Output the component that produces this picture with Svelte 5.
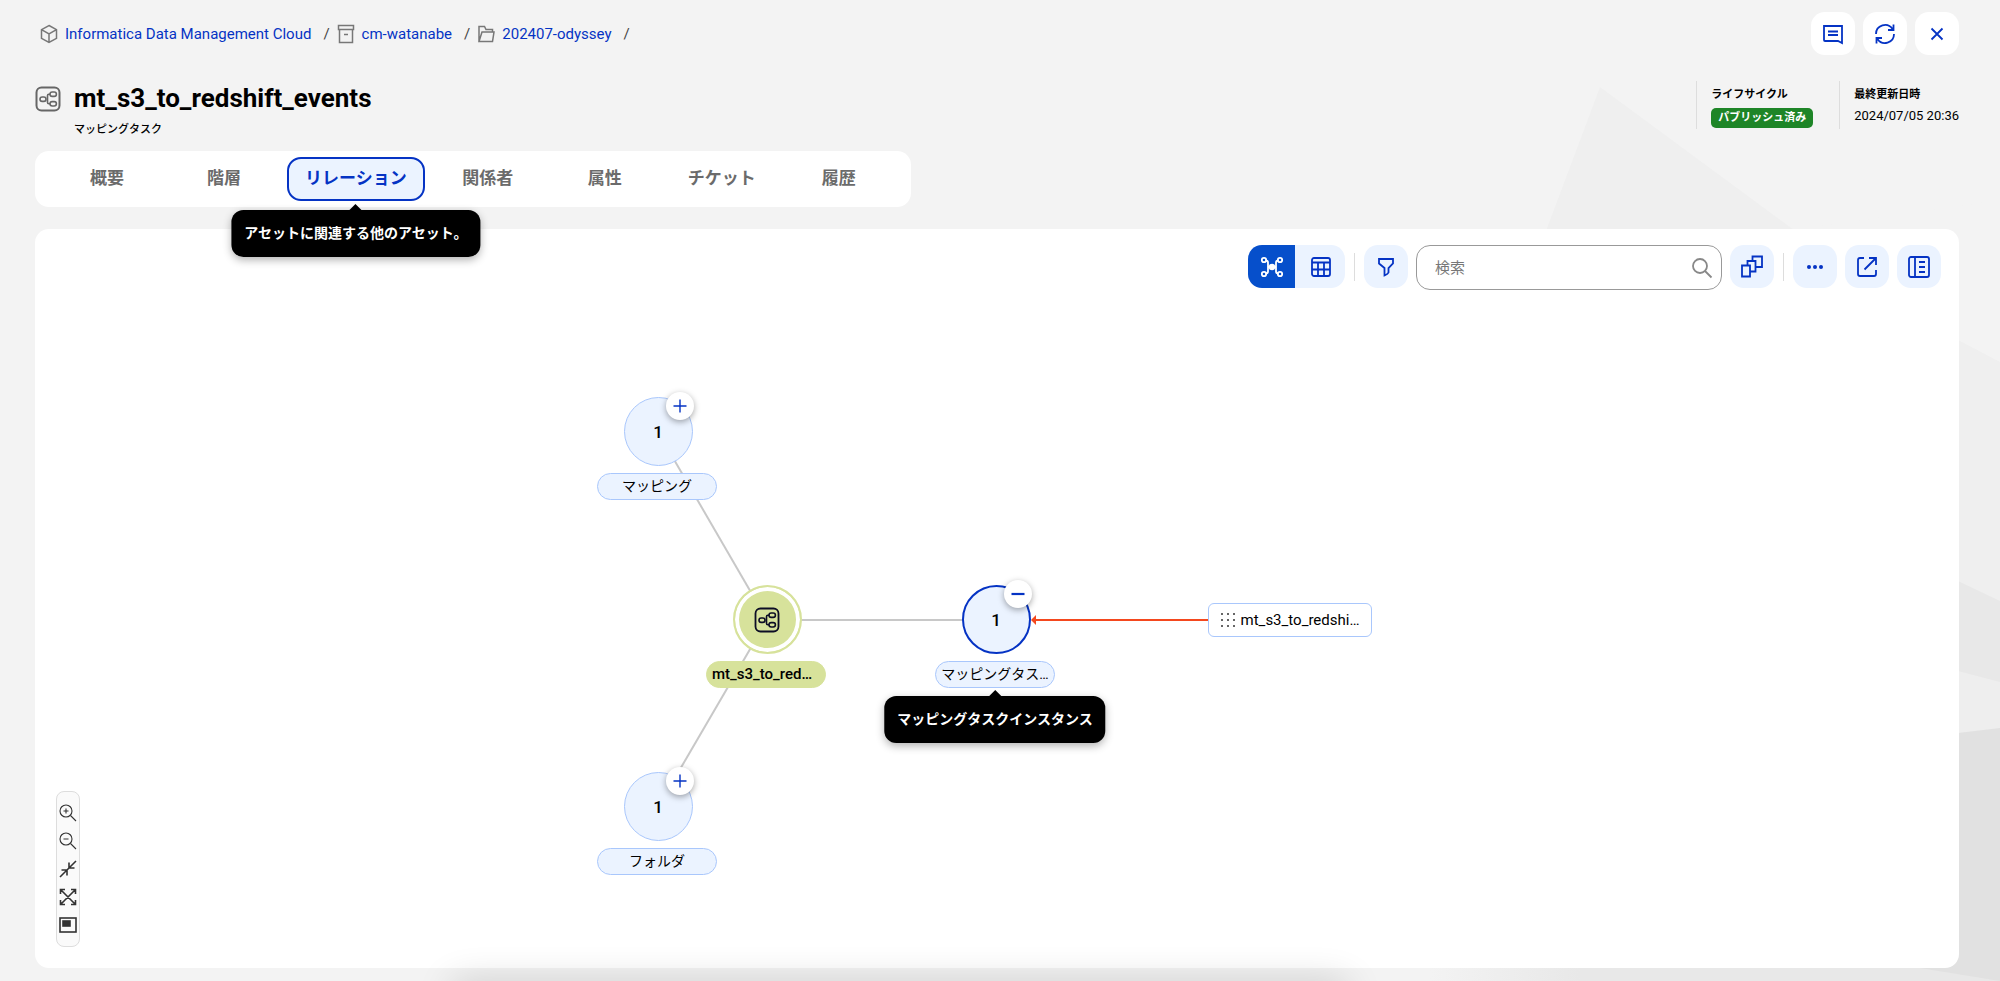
<script lang="ts">
	const crumbs = [
		{ icon: 'cube', label: 'Informatica Data Management Cloud' },
		{ icon: 'archive', label: 'cm-watanabe' },
		{ icon: 'folder', label: '202407-odyssey' }
	];

	const tabs = ['概要', '階層', 'リレーション', '関係者', '属性', 'チケット', '履歴'];
	let active = $state('リレーション');
	let query = $state('');

	// canvas coordinates of node centres
	const groups = [
		{ x: 623, y: 203, label: 'マッピング', open: false, tip: '' },
		{ x: 623, y: 578, label: 'フォルダ', open: false, tip: '' },
		{ x: 961, y: 391, label: 'マッピングタス…', open: true, tip: 'マッピングタスクインスタンス' }
	];
	const root = { x: 732, y: 391, label: 'mt_s3_to_red…' };
	const leaf = { x: 1255, y: 391, label: 'mt_s3_to_redshi…' };
</script>

{#snippet taskIcon()}
	<rect x="1.5" y="1.5" width="23" height="23" rx="5" />
	<g stroke-width="1.6">
		<rect x="5" y="11" width="6" height="4.4" rx="2.2" />
		<rect x="15" y="6" width="6.4" height="4.4" rx="2.2" />
		<rect x="15" y="15.6" width="6.4" height="4.4" rx="2.2" />
		<path d="M15 8.2h-1.2q-1.3 0-1.3 1.6v6.4q0 1.6 1.3 1.6H15" />
	</g>
{/snippet}

<div class="page">
	<svg class="backdrop" viewBox="0 0 2000 981" preserveAspectRatio="xMaxYMin slice" aria-hidden="true">
		<defs>
			<linearGradient id="floor" gradientUnits="userSpaceOnUse" x1="1430" y1="0" x2="1580" y2="0">
				<stop offset="0" stop-color="#f3f3f3" />
				<stop offset="1" stop-color="#e8e8e8" />
			</linearGradient>
		</defs>
		<path fill="#efefef" d="M1600 87 1794 230 2000 362V620H1400z" />
		<path fill="#f3f3f3" d="M1794 230 1958 340 2000 362V200z" />
		<path fill="url(#floor)" d="M1700 460 1958 581 2000 601V981H1400z" />
		<path fill="#eeeeee" d="M1958 671 2000 682V740H1958z" />
		<path fill="#e1e1e1" d="M1958 733 2000 728V981L1920 968z" />
	</svg>

	<header class="top">
		<nav class="crumbs" aria-label="breadcrumb">
			{#each crumbs as c}
				<span class="crumb">
					<svg width="18" height="20" viewBox="0 0 18 20" aria-hidden="true">
						{#if c.icon === 'cube'}
							<path d="M9 1.5 16.5 5.6V14.4L9 18.5 1.5 14.4V5.6zM1.5 5.6 9 10l7.5-4.4M9 10v8.5" />
						{:else if c.icon === 'archive'}
							<path d="M1.5 1.5h15v4h-15zM2.5 5.5v13h13v-13M7 10.500h4" />
						{:else}
							<path d="M2 17.500V2.500h5.500l1.500 3h6.500v2.500M2 17.500 5 8h12l-1.500 9.500z" />
						{/if}
					</svg>
					<a href="#{c.icon}">{c.label}</a>
					<span class="slash">/</span>
				</span>
			{/each}
		</nav>
		<div class="top-actions">
			<button type="button" class="square white" aria-label="コメント">
				<svg width="22" height="22" viewBox="0 0 22 22">
					<path d="M2 3h18v17l-4-2H3q-1 0-1-1zM6 8.500h10M6 12h10" />
				</svg>
			</button>
			<button type="button" class="square white" aria-label="更新">
				<svg width="22" height="22" viewBox="0 0 22 22">
					<path d="M2 11a9 9 0 0 1 16.500-5M20 11a9 9 0 0 1-16.500 5M19.500 1.500V7H14M2.500 20.500V15H8" />
				</svg>
			</button>
			<button type="button" class="square white" aria-label="閉じる">
				<svg width="22" height="22" viewBox="0 0 22 22"><path d="M5.500 5.500l11 11M16.500 5.500l-11 11" /></svg>
			</button>
		</div>
	</header>

	<section class="heading">
		<svg class="title-icon" width="26" height="26" viewBox="0 0 26 26" aria-hidden="true">{@render taskIcon()}</svg>
		<div class="title">
			<h1>mt_s3_to_redshift_events</h1>
			<p>マッピングタスク</p>
		</div>
		<dl class="meta">
			<div>
				<dt>ライフサイクル</dt>
				<dd><span class="badge">パブリッシュ済み</span></dd>
			</div>
			<div>
				<dt>最終更新日時</dt>
				<dd>2024/07/05 20:36</dd>
			</div>
		</dl>
	</section>

	<div class="tabs" role="tablist">
		{#each tabs as tab}
			<div class="tab-slot">
				<button
					type="button"
					role="tab"
					class="tab"
					class:active={tab === active}
					aria-selected={tab === active}
					onclick={() => (active = tab)}>{tab}</button
				>
				{#if tab === 'リレーション'}
					<div class="tooltip" role="tooltip">アセットに関連する他のアセット。</div>
				{/if}
			</div>
		{/each}
	</div>

	<main class="panel">
		<div class="toolbar">
			<div class="toggle">
				<button type="button" class="on" aria-label="ダイアグラム">
					<svg width="24" height="24" viewBox="0 0 24 24">
						<path d="M5.500 5.500q2.500 0 2.500 2v9q0 2-2.500 2M18.500 5.500q-2.500 0-2.500 2v9q0 2 2.500 2M8 12h8" />
						<circle cx="4" cy="5" r="2.200" /><circle cx="20" cy="5" r="2.200" />
						<circle cx="4" cy="19" r="2.200" /><circle cx="20" cy="19" r="2.200" />
						<circle class="dots" cx="12" cy="12" r="3.200" />
					</svg>
				</button>
				<button type="button" aria-label="テーブル">
					<svg width="22" height="22" viewBox="0 0 22 22">
						<rect x="2" y="2" width="18" height="18" rx="2" />
						<path d="M2 6.500h18M2 13.500h18M8 6.500V20M14 6.500V20" />
					</svg>
				</button>
			</div>
			<span class="divider"></span>
			<button type="button" class="square" aria-label="フィルタ">
				<svg width="22" height="22" viewBox="0 0 22 22">
					<path d="M4 3h14v4.500l-4.500 4.500v4.500q-.5 1.500-4 3V12L4 7.500z" />
				</svg>
			</button>
			<label class="search">
				<input type="search" placeholder="検索" aria-label="検索" bind:value={query} />
				<svg width="22" height="22" viewBox="0 0 22 22" aria-hidden="true">
					<circle cx="9" cy="9" r="7" /><path d="M14 14l6.500 6.500" />
				</svg>
			</label>
			<button type="button" class="square" aria-label="グループ">
				<svg width="24" height="24" viewBox="0 0 24 24">
					<path d="M2 10.500h8v11H2zM7.500 10.500v-4.500h8v10.500H10M12.500 6V1.500H22v10.500h-6.500" />
				</svg>
			</button>
			<span class="divider"></span>
			<button type="button" class="square" aria-label="その他">
				<svg width="22" height="22" viewBox="0 0 22 22">
					<g class="dots"><circle cx="5" cy="11" r="2" /><circle cx="11" cy="11" r="2" /><circle cx="17" cy="11" r="2" /></g>
				</svg>
			</button>
			<button type="button" class="square" aria-label="開く">
				<svg width="22" height="22" viewBox="0 0 22 22">
					<path d="M8 2H4Q2 2 2 4v14q0 2 2 2h14q2 0 2-2v-4M13 2h7v7M20 2 8.500 13.500" />
				</svg>
			</button>
			<button type="button" class="square" aria-label="パネル">
				<svg width="24" height="24" viewBox="0 0 24 24">
					<rect x="2" y="2" width="20" height="20" rx="2" />
					<path d="M8 2v20M12 7h6M12 12h6M12 17h6" />
				</svg>
			</button>
		</div>

		<div class="canvas">
			<svg class="edges" aria-hidden="true">
				{#each groups as g}
					<line x1={root.x} y1={root.y} x2={g.x} y2={g.y} />
				{/each}
				<line class="hot" x1="1000" y1="391" x2="1174" y2="391" />
				<path class="head" d="M996 391l5-5v10z" />
			</svg>

			{#each groups as g}
				<div class="node" style:left="{g.x}px" style:top="{g.y}px">
					<div class="circle" class:open={g.open}>1</div>
					<button type="button" class="expand" aria-label={g.open ? '折りたたむ' : '展開'}>
						<svg width="14" height="14" viewBox="0 0 14 14">
							{#if g.open}
								<path stroke-width="2.200" d="M.5 7h13" />
							{:else}
								<path stroke-width="1.400" d="M.5 7h13M7 .5v13" />
							{/if}
						</svg>
					</button>
					<div class="label">
						{g.label}
						{#if g.tip}<div class="tooltip" role="tooltip">{g.tip}</div>{/if}
					</div>
				</div>
			{/each}

			<div class="node root" style:left="{root.x}px" style:top="{root.y}px">
				<div class="circle">
					<svg width="26" height="26" viewBox="0 0 26 26">{@render taskIcon()}</svg>
				</div>
				<div class="label">{root.label}</div>
			</div>

			<div class="leaf" style:left="{leaf.x}px" style:top="{leaf.y}px">
				<svg width="14" height="14" viewBox="0 0 14 14">
					{#each [1, 7, 13] as cy}
						{#each [1, 7, 13] as cx}<rect x={cx - 1} y={cy - 1} width="2" height="2" />{/each}
					{/each}
				</svg>
				{leaf.label}
			</div>

			<div class="zoom">
				<button type="button" aria-label="拡大">
					<svg width="18" height="18" viewBox="0 0 18 18"><circle cx="7" cy="7" r="6" /><path d="M11.500 11.500 17 17M4.500 7h5M7 4.500v5" /></svg>
				</button>
				<button type="button" aria-label="縮小">
					<svg width="18" height="18" viewBox="0 0 18 18"><circle cx="7" cy="7" r="6" /><path d="M11.500 11.500 17 17M4.500 7h5" /></svg>
				</button>
				<button type="button" aria-label="縮める">
					<svg class="bold" width="18" height="18" viewBox="0 0 18 18"><path d="M1 17 17 1M2.500 10H8v5.500M10 2.500V8h5.500" /></svg>
				</button>
				<button type="button" aria-label="全体表示">
					<svg class="bold" width="18" height="18" viewBox="0 0 18 18"><path d="M1.500 1.500l15 15M16.500 1.500l-15 15M1.500 6V1.500H6M12 1.500h4.500V6M16.500 12v4.500H12M6 16.500H1.500V12" /></svg>
				</button>
				<button type="button" aria-label="ミニマップ">
					<svg class="bold" width="18" height="18" viewBox="0 0 18 18"><rect x="1" y="2" width="16" height="14" /><rect class="fill" x="4" y="5" width="7" height="5" /></svg>
				</button>
			</div>
		</div>
	</main>
	<div class="dock-shadow"></div>
</div>

<style>
	:global(body) {
		background: #f3f3f3;
	}

	.page {
		--blue: #0533c4;
		--pale: #ebf3ff;
		--line: #a9c7fc;
		position: relative;
		box-sizing: border-box;
		display: flex;
		flex-direction: column;
		min-height: 100vh;
		padding: 12px 41px 13px 35px;
		overflow: hidden;
		font-family: Roboto, 'Noto Sans CJK JP', sans-serif;
		color: #000;
	}

	.page > * {
		position: relative;
	}

	.page > .backdrop {
		position: absolute;
		inset: 0;
		width: 100%;
		height: 100%;
	}

	svg {
		flex: none;
		fill: none;
		stroke: currentColor;
		stroke-width: 1.8;
	}

	.backdrop,
	.dots {
		stroke: none;
	}

	.dots {
		fill: currentColor;
	}

	button {
		display: flex;
		align-items: center;
		justify-content: center;
		margin: 0;
		padding: 0;
		border: 0;
		background: none;
		color: var(--blue);
		font: inherit;
		cursor: pointer;
	}

	.top {
		display: flex;
		justify-content: space-between;
	}

	.crumbs {
		display: flex;
		gap: 7px;
		height: 43px;
		padding-left: 5px;
		font-size: 15px;
	}

	.crumb {
		display: flex;
		align-items: center;
		gap: 7px;
		line-height: 20px;
	}

	.crumb svg {
		color: #777;
		stroke-width: 1.5;
	}

	.crumb a {
		color: var(--blue);
		text-decoration: none;
	}

	.slash {
		padding-left: 5px;
		color: #444;
	}

	.top-actions {
		display: flex;
		gap: 8px;
	}

	.square {
		width: 44px;
		height: 43px;
		border-radius: 14px;
		background: var(--pale);
	}

	.square.white {
		background: #fff;
	}

	.heading {
		display: flex;
		align-items: flex-start;
		margin-top: 26px;
		height: 70px;
	}

	.title-icon {
		margin-top: 5px;
		color: #666;
		stroke-width: 2;
	}

	.title {
		flex: 1;
		padding-left: 13px;
	}

	h1 {
		margin: 0;
		font-size: 26px;
		font-weight: 700;
		line-height: 34px;
	}

	.title p {
		margin: 7px 0 0;
		font-size: 11px;
		font-weight: 500;
		line-height: 16px;
	}

	.meta {
		display: flex;
		gap: 26px;
		margin: 0;
	}

	.meta > div {
		box-sizing: border-box;
		height: 48px;
		padding: 6px 0 0 14px;
		border-left: 1px solid #ddd;
	}

	dt {
		font-size: 11px;
		font-weight: 700;
		line-height: 16px;
	}

	dd {
		display: flex;
		margin: 5px 0 0;
		font-size: 13px;
		line-height: 16px;
	}

	.badge {
		padding: 2px 7px;
		border-radius: 5px;
		background: #1e8527;
		color: #fff;
		font-size: 11px;
		font-weight: 700;
	}

	.tabs {
		z-index: 2;
		display: flex;
		align-self: flex-start;
		gap: 9px;
		padding: 6px 18px;
		border-radius: 14px;
		background: #fff;
	}

	.tab-slot {
		position: relative;
	}

	.tab {
		box-sizing: border-box;
		min-width: 108px;
		height: 44px;
		padding: 0 16px 5px;
		border: 2px solid transparent;
		border-radius: 14px;
		color: #6b6b6b;
		font-size: 17px;
		font-weight: 700;
	}

	.tab.active {
		border-color: var(--blue);
		background: var(--pale);
		color: var(--blue);
	}

	.tooltip {
		position: absolute;
		top: calc(100% + 9px);
		left: 50%;
		z-index: 3;
		padding: 0 13px;
		border-radius: 12px;
		background: #000;
		box-shadow: 0 3px 8px rgba(0, 0, 0, 0.3);
		color: #fff;
		font-size: 14px;
		font-weight: 700;
		line-height: 47px;
		white-space: nowrap;
		transform: translateX(-50%);
	}

	.tooltip::before {
		content: '';
		position: absolute;
		bottom: 100%;
		left: 50%;
		border: 6px solid transparent;
		border-top: 0;
		border-bottom-color: #000;
		transform: translateX(-50%);
	}

	.panel {
		display: flex;
		flex: 1;
		flex-direction: column;
		margin-top: 22px;
		border-radius: 14px;
		background: #fff;
	}

	.toolbar {
		z-index: 1;
		display: flex;
		align-items: flex-start;
		justify-content: flex-end;
		gap: 8px;
		padding: 16px 18px 0;
	}

	.toggle {
		display: flex;
		gap: 1px;
		overflow: hidden;
		border-radius: 14px;
		background: var(--pale);
	}

	.toggle button {
		width: 49px;
		height: 43px;
	}

	.toggle .on {
		width: 47px;
		background: #064fcb;
		color: #fff;
	}

	.divider {
		width: 1px;
		height: 28px;
		margin: 8px 1px 0;
		background: #ddd;
	}

	.search {
		box-sizing: border-box;
		display: flex;
		align-items: center;
		width: 306px;
		height: 45px;
		padding: 0 8px 0 18px;
		border: 1px solid #999;
		border-radius: 14px;
		background: #fff;
		color: #888;
	}

	.search input {
		flex: 1;
		min-width: 0;
		padding: 0;
		border: 0;
		outline: 0;
		background: none;
		font: 15px Roboto, 'Noto Sans CJK JP', sans-serif;
	}

	.search input::placeholder {
		color: #777;
	}

	.canvas {
		position: relative;
		flex: 1;
		min-height: 660px;
		margin-top: -61px;
	}

	.edges {
		position: absolute;
		inset: 0;
		width: 100%;
		height: 100%;
		stroke: #c8c8c8;
		stroke-width: 2;
	}

	.hot {
		stroke: #f4481e;
	}

	.head {
		fill: #f4481e;
		stroke: none;
	}

	.node {
		position: absolute;
		display: flex;
		flex-direction: column;
		align-items: center;
		width: 120px;
		margin: -35px 0 0 -60px;
	}

	.circle {
		box-sizing: border-box;
		display: flex;
		align-items: center;
		justify-content: center;
		width: 69px;
		height: 69px;
		border: 1px solid var(--line);
		border-radius: 50%;
		background: var(--pale);
		font-size: 17px;
		font-weight: 500;
	}

	.circle.open {
		border: 2px solid var(--blue);
	}

	.expand {
		position: absolute;
		top: -5px;
		left: 68px;
		width: 28px;
		height: 28px;
		border-radius: 50%;
		background: #fff;
		box-shadow: 0 2px 6px rgba(0, 0, 0, 0.35);
	}

	.label {
		position: relative;
		box-sizing: border-box;
		width: 120px;
		height: 27px;
		margin: 7px 2px 0 0;
		border: 1px solid var(--line);
		border-radius: 14px;
		background: var(--pale);
		font-size: 14px;
		line-height: 24px;
		text-align: center;
		white-space: nowrap;
	}

	.root .circle {
		border: 2px solid #d7e29b;
		background: #d7e29b;
		box-shadow: inset 0 0 0 4px #fff;
		color: #0d0d25;
	}

	.root .label {
		padding-left: 5px;
		border-color: #d7e29b;
		background: #d7e29b;
		font-size: 15px;
		font-weight: 500;
		text-align: left;
	}

	.leaf {
		position: absolute;
		box-sizing: border-box;
		display: flex;
		align-items: center;
		justify-content: center;
		gap: 6px;
		width: 164px;
		height: 34px;
		border: 1px solid var(--line);
		border-radius: 6px;
		background: #fff;
		font-size: 15px;
		transform: translate(-50%, -50%);
	}

	.leaf svg {
		fill: #666;
		stroke: none;
	}

	.zoom {
		position: absolute;
		bottom: 21px;
		left: 21px;
		box-sizing: border-box;
		display: flex;
		flex-direction: column;
		gap: 10px;
		padding: 12px 2px;
		border: 1px solid #ddd;
		border-radius: 8px;
		background: #fafafa;
	}

	.zoom button {
		height: 18px;
		color: #333;
	}

	.zoom svg {
		stroke-width: 1.1;
	}

	.zoom .bold {
		stroke-width: 1.6;
	}

	.zoom .fill {
		fill: currentColor;
	}

	.page > .dock-shadow {
		position: absolute;
		right: 33%;
		bottom: -20px;
		left: 23%;
		height: 10px;
		border-radius: 10px;
		box-shadow: 0 0 36px 10px rgba(0, 0, 0, 0.16);
	}
</style>
